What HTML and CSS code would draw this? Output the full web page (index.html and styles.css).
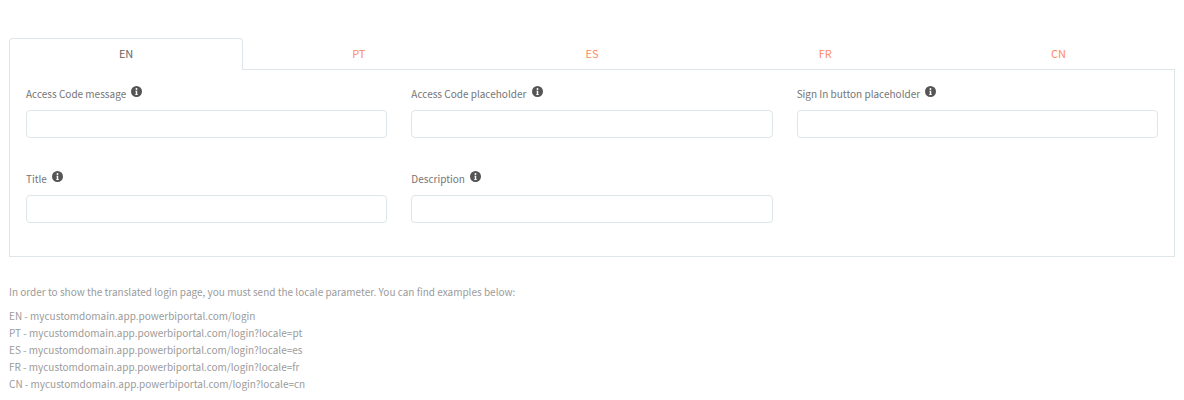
FILE: index.html
```html
<!DOCTYPE html>
<html lang="en">
<head>
    <meta charset="UTF-8">
    <meta name="viewport" content="width=device-width, initial-scale=1.0">
    <title>Login page translations</title>
    <link rel="stylesheet" href="styles.css">
</head>
<body>

    <div class="tabs">
        <a class="tab active">EN</a>
        <a class="tab">PT</a>
        <a class="tab">ES</a>
        <a class="tab">FR</a>
        <a class="tab">CN</a>
    </div>

    <div class="panel">
        <div class="field">
            <label>Access Code message <svg class="info" viewBox="0 0 12 12"><use href="#info-icon"/></svg></label>
            <input type="text">
        </div>
        <div class="field">
            <label>Access Code placeholder <svg class="info" viewBox="0 0 12 12"><use href="#info-icon"/></svg></label>
            <input type="text">
        </div>
        <div class="field">
            <label>Sign In button placeholder <svg class="info" viewBox="0 0 12 12"><use href="#info-icon"/></svg></label>
            <input type="text">
        </div>
        <div class="field">
            <label>Title <svg class="info" viewBox="0 0 12 12"><use href="#info-icon"/></svg></label>
            <input type="text">
        </div>
        <div class="field">
            <label>Description <svg class="info" viewBox="0 0 12 12"><use href="#info-icon"/></svg></label>
            <input type="text">
        </div>
    </div>

    <p class="help-intro">In order to show the translated login page, you must send the locale parameter. You can find examples below:</p>
    <ul class="help-list">
        <li>EN - mycustomdomain.app.powerbiportal.com/login</li>
        <li>PT - mycustomdomain.app.powerbiportal.com/login?locale=pt</li>
        <li>ES - mycustomdomain.app.powerbiportal.com/login?locale=es</li>
        <li>FR - mycustomdomain.app.powerbiportal.com/login?locale=fr</li>
        <li>CN - mycustomdomain.app.powerbiportal.com/login?locale=cn</li>
    </ul>

    <svg class="icon-defs" aria-hidden="true">
        <symbol id="info-icon" viewBox="0 0 12 12">
            <path fill-rule="evenodd" d="M6 0a6 6 0 1 0 0 12A6 6 0 0 0 6 0zM6 2.2a1.05 1.05 0 1 1 0 2.1 1.05 1.05 0 0 1 0-2.1zM4.8 5.1h2v3.700h.5v1H4.700v-1h.5V6.100h-.4z"/>
        </symbol>
    </svg>

</body>
</html>
```

FILE: styles.css
```css
body { margin: 0; padding: 38px 9px 0; background-color: #fff; font-family: "Noto Sans CJK SC", "Noto Sans", sans-serif; font-size: 10px; color: #757575; }
.tabs { display: grid; grid-template-columns: repeat(5, 1fr); height: 32px; }
.tab { display: flex; align-items: center; justify-content: center; padding-bottom: 2px; box-sizing: border-box; font-size: 11px; color: #ff8a65; border-bottom: 1px solid #dde6e8; }
.tab.active { margin-right: -1px; padding-bottom: 3px; color: #666; background-color: #fff; border: 1px solid #dde6e8; border-bottom: none; border-radius: 4px 4px 0 0; }
.panel { display: grid; grid-template-columns: repeat(3, 1fr); align-content: start; column-gap: 24px; row-gap: 27px; height: 187px; box-sizing: border-box; padding: 10px 16px 0; border: 1px solid #dde6e8; border-top: none; }
.field { display: flex; flex-direction: column; }
label { display: block; height: 28px; margin-bottom: 2px; line-height: 28px; white-space: nowrap; }
.info { width: 11px; height: 11px; margin-left: 3px; vertical-align: 1px; fill: #555; }
input { display: block; width: 100%; height: 28px; box-sizing: border-box; border: 1px solid #dde6e8; border-radius: 4px; background-color: #fff; }
.help-intro { margin: 26px 0 6px; line-height: 18px; color: #9b9b9b; }
.help-list { margin: 0; padding: 0; list-style: none; line-height: 17px; color: #9b9b9b; }
.icon-defs { display: none; }
```
